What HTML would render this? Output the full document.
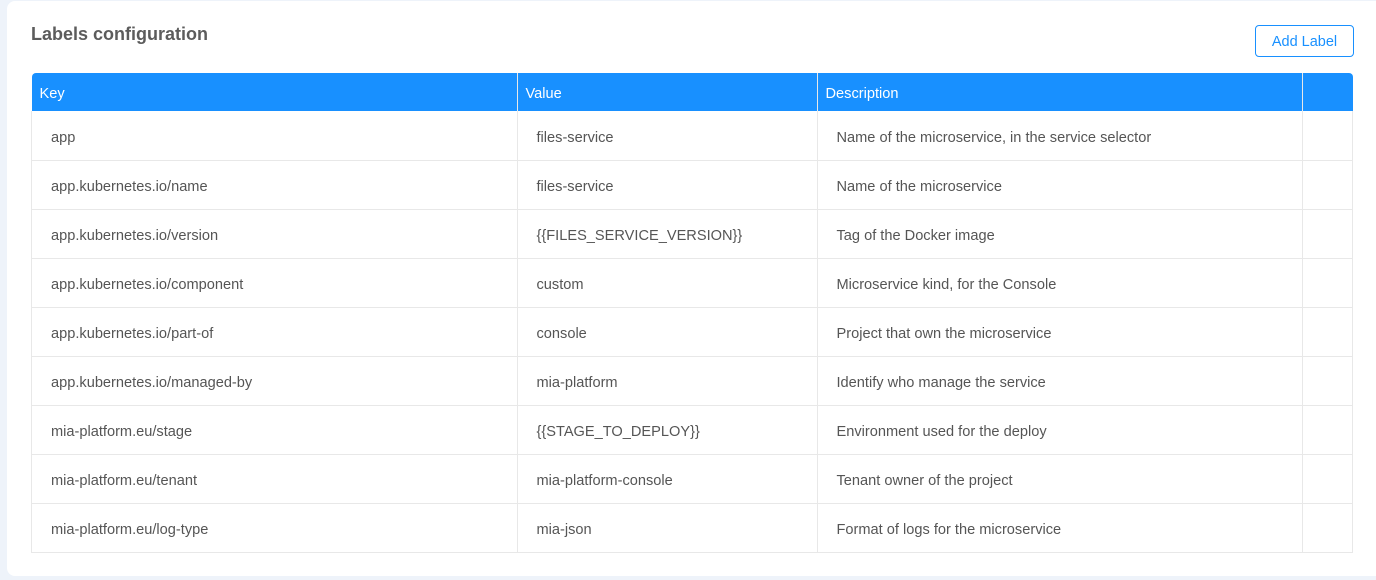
<!DOCTYPE html>
<html><head><style>
body{margin:0;width:1376px;height:580px;background:#eef3fa;font-family:"Liberation Sans",sans-serif;overflow:hidden;position:relative}
.card{position:absolute;left:7px;top:1px;width:1380px;height:575px;background:#fff;border-radius:8px}
h1{position:absolute;left:31px;top:24px;margin:0;font-size:18px;font-weight:bold;color:#5c5c5c}
.btn{position:absolute;left:1255px;top:25px;width:97px;height:30px;border:1px solid #1890ff;border-radius:4px;color:#1890ff;font-size:14.5px;line-height:32px;text-align:center;box-sizing:content-box}
table{position:absolute;left:31px;top:73px;border-collapse:collapse;font-size:14.6px;color:#555}
th{background:#1890ff;color:#fff;font-weight:normal;text-align:left;height:34px;padding:4px 0 0 8px;border-left:1px solid #e8e8e8}
th:first-child{border-left:none;border-top-left-radius:4px}
th:last-child{border-top-right-radius:4px}
td{height:44px;padding:4px 0 0 19px;border:1px solid #e8e8e8;border-top:none}
tr:nth-child(2) td{height:44px;padding-top:5px}
</style></head><body>
<div class="card"></div>
<h1>Labels configuration</h1>
<div class="btn">Add Label</div>
<table>
<tr><th style="width:477px">Key</th><th style="width:291px">Value</th><th style="width:476px">Description</th><th style="width:42px"></th></tr>
<tr><td>app</td><td>files-service</td><td>Name of the microservice, in the service selector</td><td></td></tr>
<tr><td>app.kubernetes.io/name</td><td>files-service</td><td>Name of the microservice</td><td></td></tr>
<tr><td>app.kubernetes.io/version</td><td>{{FILES_SERVICE_VERSION}}</td><td>Tag of the Docker image</td><td></td></tr>
<tr><td>app.kubernetes.io/component</td><td>custom</td><td>Microservice kind, for the Console</td><td></td></tr>
<tr><td>app.kubernetes.io/part-of</td><td>console</td><td>Project that own the microservice</td><td></td></tr>
<tr><td>app.kubernetes.io/managed-by</td><td>mia-platform</td><td>Identify who manage the service</td><td></td></tr>
<tr><td>mia-platform.eu/stage</td><td>{{STAGE_TO_DEPLOY}}</td><td>Environment used for the deploy</td><td></td></tr>
<tr><td>mia-platform.eu/tenant</td><td>mia-platform-console</td><td>Tenant owner of the project</td><td></td></tr>
<tr><td>mia-platform.eu/log-type</td><td>mia-json</td><td>Format of logs for the microservice</td><td></td></tr>
</table>
</body></html>
